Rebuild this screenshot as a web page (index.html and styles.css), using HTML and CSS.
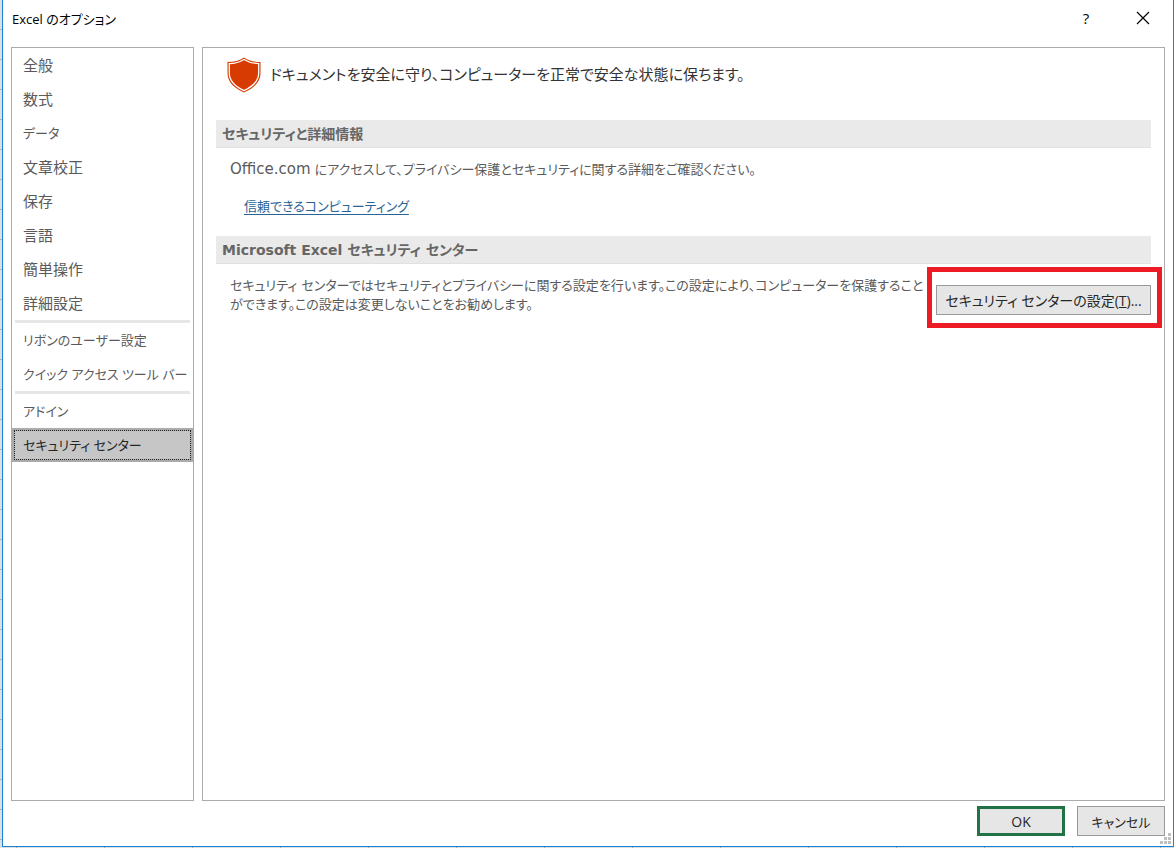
FILE: index.html
```html
<!DOCTYPE html>
<html lang="ja">
<head>
    <meta charset="UTF-8">
    <meta name="viewport" content="width=device-width, initial-scale=1.0">
    <title>Excel のオプション</title>
    <link rel="stylesheet" href="styles.css">
</head>
<body>
    <div class="dialog">
        <header class="titlebar">
            <h1>Excel のオプション</h1>
            <button type="button" class="title-button" aria-label="ヘルプ">?</button>
            <button type="button" class="title-button" aria-label="閉じる">
                <svg width="14" height="14" viewBox="0 0 14 14"><path d="M1 1L13 13M13 1L1 13" fill="none" stroke="#000" stroke-width="1.2"/></svg>
            </button>
        </header>
        <div class="content">
            <nav class="sidebar">
                <ul>
                    <li><a href="#">全般</a></li>
                    <li><a href="#">数式</a></li>
                    <li><a href="#" class="kana">データ</a></li>
                    <li><a href="#">文章校正</a></li>
                    <li><a href="#">保存</a></li>
                    <li><a href="#">言語</a></li>
                    <li><a href="#">簡単操作</a></li>
                    <li><a href="#">詳細設定</a></li>
                </ul>
                <ul>
                    <li><a href="#" class="kana">リボンのユーザー設定</a></li>
                    <li><a href="#" class="kana">クイック アクセス ツール バー</a></li>
                </ul>
                <ul>
                    <li><a href="#" class="kana">アドイン</a></li>
                    <li><a href="#" class="kana selected">セキュリティ センター</a></li>
                </ul>
            </nav>
            <main class="panel">
                <div class="intro">
                    <svg width="34" height="36" viewBox="0 0 34 36">
                        <path d="M17 0.5C21 3.5 27 5 33.5 5V16C33.5 25 27 31 17 35.5C7 31 0.5 25 0.5 16V5C7 5 13 3.5 17 0.5Z" fill="#d83b01"/>
                        <path d="M17 2.5C21 5 26 6.5 31.7 6.6V16C31.7 24 26 29.5 17 33.6C8 29.5 2.3 24 2.3 16V6.6C8 6.5 13 5 17 2.5Z" fill="none" stroke="#fff" stroke-width="1.3"/>
                    </svg>
                    <p>ドキュメントを安全に守り、コンピューターを正常で安全な状態に保ちます。</p>
                </div>
                <section>
                    <h2>セキュリティと詳細情報</h2>
                    <div class="section-body">
                        <p><span class="latin">Office.com</span> にアクセスして、プライバシー保護とセキュリティに関する詳細をご確認ください。</p>
                        <a href="#" class="link">信頼できるコンピューティング</a>
                    </div>
                </section>
                <section>
                    <h2>Microsoft Excel セキュリティ センター</h2>
                    <div class="section-body center-row">
                        <p>セキュリティ センターではセキュリティとプライバシーに関する設定を行います。この設定により、コンピューターを保護することができます。この設定は変更しないことをお勧めします。</p>
                        <div class="highlight">
                            <button type="button" class="button settings">セキュリティ センターの設定(<u>T</u>)...</button>
                        </div>
                    </div>
                </section>
            </main>
        </div>
        <footer>
            <button type="button" class="button default">OK</button>
            <button type="button" class="button cancel">キャンセル</button>
        </footer>
        <svg class="grip" width="11" height="11" viewBox="0 0 11 11"><path d="M8 0h3v3h-3zM4 4h3v3h-3zM8 4h3v3h-3zM0 8h3v3h-3zM4 8h3v3h-3zM8 8h3v3h-3z" fill="#bfbfbf"/></svg>
    </div>
</body>
</html>
```
FILE: styles.css
```css
* {
    box-sizing: border-box;
}

body {
    margin: 0;
    min-height: 100vh;
    display: flex;
    padding: 0 0 1px 2px;
    background-color: #dcdfe3;
    background-image: linear-gradient(#b0b3b7 1px, transparent 1px), linear-gradient(90deg, #a3afb9 1px, transparent 1px);
    background-size: 100% 30px, 88px 100%;
    background-position: 0 29px, 16px 0;
    font-family: "DejaVu Sans", "Noto Sans CJK JP", sans-serif;
    font-size: 13px;
    font-feature-settings: "palt";
    color: #5a5a5a;
}

h1, h2, p, ul {
    margin: 0;
    padding: 0;
}

.dialog {
    position: relative;
    flex: 1;
    display: flex;
    flex-direction: column;
    background-color: #fff;
    border: 1px solid #1a80d2;
    border-top: none;
    padding: 0 8px 10px;
}

.titlebar {
    display: flex;
    align-items: center;
    height: 47px;
    padding: 0 1px 11px;
}

.titlebar h1 {
    flex: 1;
    font-family: "Open Sans", "Noto Sans CJK JP", sans-serif;
    font-size: 13px;
    font-weight: normal;
    color: #000;
}

.title-button {
    display: flex;
    align-items: center;
    justify-content: center;
    width: 42px;
    height: 30px;
    margin-left: 15px;
    padding: 0;
    border: none;
    background: none;
    font: 500 15px "Open Sans", sans-serif;
    color: #000;
}

.content {
    flex: 1;
    display: flex;
    gap: 8px;
}

.sidebar {
    width: 183px;
    border: 1px solid #ababab;
    font-family: "Open Sans", "Noto Sans CJK JP", sans-serif;
    font-size: 15px;
}

.sidebar ul {
    list-style: none;
}

.sidebar ul + ul::before {
    content: "";
    display: block;
    height: 3px;
    margin: 0 3px;
    background-color: #e6e6e6;
}

.sidebar a {
    display: block;
    height: 34px;
    padding: 0 11px;
    line-height: 34px;
    white-space: nowrap;
    color: #5a5a5a;
    text-decoration: none;
}

/* kana labels are set smaller so the longest one fits the column */
.sidebar .kana {
    font-size: 13px;
}

.sidebar a.selected {
    padding: 0 8px;
    line-height: 28px;
    border: 3px solid #ababab;
    background-color: #c6c6c6;
    color: #262626;
    outline: 1px dotted #262626;
    outline-offset: -3px;
}

.panel {
    flex: 1;
    border: 1px solid #ababab;
    padding: 8px 13px;
}

.intro {
    display: flex;
    align-items: center;
    gap: 9px;
    padding-left: 11px;
    margin-bottom: 26px;
    font-size: 15px;
    line-height: 38px;
    color: #333;
}

.panel h2 {
    height: 28px;
    padding-left: 6px;
    background-color: #eaeaea;
    border-bottom: 1px solid #e1e1e1;
    font-size: 14px;
    font-weight: bold;
    line-height: 28px;
    color: #666;
}

.section-body {
    padding: 12px 0 20px 14px;
    line-height: 19px;
}

.latin {
    font-size: 15px;
}

.link {
    display: inline-block;
    margin: 18px 0 0 14px;
    color: #2a6496;
    text-underline-offset: 3px;
}

.center-row {
    display: flex;
    gap: 10px;
}

.center-row p {
    flex: 1;
}

.highlight {
    position: relative;
    align-self: flex-start;
    margin-top: 9px;
}

.highlight::after {
    content: "";
    position: absolute;
    inset: -18px -11px -13px -9px;
    border: 5px solid #ed1c24;
    pointer-events: none;
}

.button {
    width: 88px;
    height: 30px;
    padding: 0;
    border: 1px solid #999;
    background-color: #e6e6e6;
    font-family: "Open Sans", "Noto Sans CJK JP", sans-serif;
    font-size: 14px;
    font-feature-settings: "palt";
    color: #262626;
}

.button.settings {
    width: 215px;
}

.button.default {
    border: 3px solid #217346;
}

.button.cancel {
    font-size: 13px;
}

footer {
    display: flex;
    justify-content: flex-end;
    gap: 12px;
    padding-top: 5px;
}

.grip {
    position: absolute;
    right: 2px;
    bottom: 2px;
}
```
